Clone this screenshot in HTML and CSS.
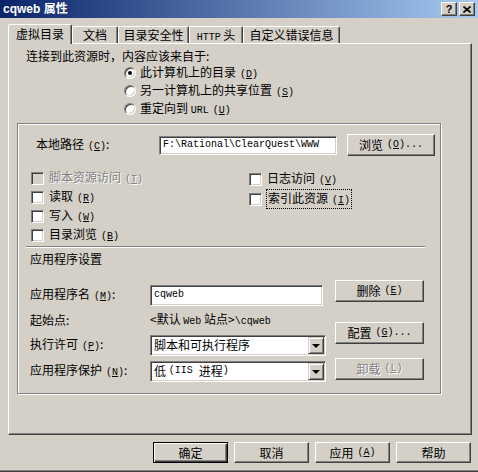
FILE: index.html
```html
<!DOCTYPE html>
<html lang="zh">
<head>
<meta charset="utf-8">
<title>cqweb 属性</title>
<link rel="stylesheet" href="styles.css">
</head>
<body>
<div class="window">
  <div class="titlebar">
    <span class="title">cqweb 属性</span>
    <div class="tb-btns">
      <span class="tb-btn help">?</span>
      <span class="tb-btn"><svg width="8" height="7" viewBox="0 0 8 7"><path d="M0.5 0.5 L7.5 6.5 M7.5 0.5 L0.5 6.5" stroke="#000" stroke-width="1.6" fill="none"/></svg></span>
    </div>
  </div>

  <div class="tabs">
    <div class="tab t1 active">虚拟目录</div>
    <div class="tab t2">文档</div>
    <div class="tab t3">目录安全性</div>
    <div class="tab t4"><span class="mono">HTTP</span> 头</div>
    <div class="tab t5">自定义错误信息</div>
  </div>

  <div class="panel">
    <div class="intro">连接到此资源时，内容应该来自于:</div>
    <div class="radios">
      <div class="radio-row"><span class="radio checked"></span><span>此计算机上的目录<span class="acc">(<u>D</u>)</span></span></div>
      <div class="radio-row"><span class="radio"></span><span>另一计算机上的共享位置<span class="acc">(<u>S</u>)</span></span></div>
      <div class="radio-row"><span class="radio"></span><span>重定向到 <span class="mono">URL</span><span class="acc">(<u>U</u>)</span></span></div>
    </div>

    <div class="group">
      <div class="path-row">
        <span class="path-label">本地路径<span class="acc">(<u>C</u>)</span>:</span>
        <div class="field path-field"><span class="mono">F:\Rational\ClearQuest\WWW</span></div>
        <div class="btn browse">浏览<span class="acc">(<u>O</u>)...</span></div>
      </div>

      <div class="checks">
        <div class="check-col left">
          <div class="check-row disabled"><span class="checkbox off"></span><span>脚本资源访问<span class="acc">(<u>T</u>)</span></span></div>
          <div class="check-row"><span class="checkbox"></span><span>读取<span class="acc">(<u>R</u>)</span></span></div>
          <div class="check-row"><span class="checkbox"></span><span>写入<span class="acc">(<u>W</u>)</span></span></div>
          <div class="check-row"><span class="checkbox"></span><span>目录浏览<span class="acc">(<u>B</u>)</span></span></div>
        </div>
        <div class="check-col right">
          <div class="check-row"><span class="checkbox"></span><span>日志访问<span class="acc">(<u>V</u>)</span></span></div>
          <div class="check-row"><span class="checkbox"></span><span class="focus">索引此资源<span class="acc">(<u>I</u>)</span></span></div>
        </div>
      </div>

      <div class="sep"></div>
      <div class="app-title">应用程序设置</div>

      <div class="app">
        <div class="app-fields">
          <div class="app-row">
            <span class="app-label">应用程序名<span class="acc">(<u>M</u>)</span>:</span>
            <div class="field app-input"><span class="mono">cqweb</span></div>
          </div>
          <div class="app-row origin">
            <span class="app-label">起始点:</span>
            <span class="origin-val">&lt;默认 <span class="mono">Web</span> 站点&gt;<span class="mono">\cqweb</span></span>
          </div>
          <div class="app-row">
            <span class="app-label">执行许可<span class="acc">(<u>P</u>)</span>:</span>
            <div class="field select"><span class="sel-text">脚本和可执行程序</span><span class="drop"><span class="tri"></span></span></div>
          </div>
          <div class="app-row protect">
            <span class="app-label">应用程序保护<span class="acc">(<u>N</u>)</span>:</span>
            <div class="field select"><span class="sel-text">低&nbsp;<span class="mono">(IIS&nbsp;</span>进程<span class="mono">)</span></span><span class="drop"><span class="tri"></span></span></div>
          </div>
        </div>
        <div class="app-btns">
          <div class="btn del">删除<span class="acc">(<u>E</u>)</span></div>
          <div class="btn cfg">配置<span class="acc">(<u>G</u>)...</span></div>
          <div class="btn unload disabled">卸载<span class="acc">(<u>L</u>)</span></div>
        </div>
      </div>
    </div>
  </div>

  <div class="footer">
    <div class="btn default">确定</div>
    <div class="btn">取消</div>
    <div class="btn">应用<span class="acc">(<u>A</u>)</span></div>
    <div class="btn">帮助</div>
  </div>
</div>
</body>
</html>
```

FILE: styles.css
```css
* { box-sizing: border-box; }

body {
  margin: 0;
  background: #d4d0c8;
  font-family: "Noto Sans CJK SC", "Liberation Sans", sans-serif;
  font-size: 12px;
  line-height: 16px;
  color: #000;
}

.window {
  width: 478px;
  height: 472px;
  background: #d4d0c8;
  border-bottom: 1px solid #404040;
  box-shadow: inset 0 -1px #808080;
  overflow: hidden;
}

.mono {
  font-family: "Liberation Mono", monospace;
  font-size: 10px;
}

.acc {
  font-family: "Liberation Mono", monospace;
  font-size: 10px;
  margin-left: 4px;
}

u { text-decoration: underline; text-underline-offset: 1px; }

/* title bar */
.titlebar {
  height: 18px;
  display: flex;
  align-items: center;
  justify-content: space-between;
  padding: 0 3px;
  background: linear-gradient(to right, #0a246a, #a6caf0);
}
.title {
  color: #fff;
  font-family: "Liberation Sans", "Noto Sans CJK SC", sans-serif;
  font-weight: bold;
  font-size: 12px;
  line-height: 14px;
}
.tb-btns { display: flex; gap: 2px; }
.tb-btn {
  width: 16px;
  height: 14px;
  background: #d4d0c8;
  border: 1px solid;
  border-color: #fff #404040 #404040 #fff;
  box-shadow: inset -1px -1px #808080;
  display: flex;
  align-items: center;
  justify-content: center;
  font-family: "Liberation Sans", sans-serif;
  font-weight: bold;
  font-size: 11px;
  line-height: 12px;
}

/* tabs */
.tabs {
  display: flex;
  align-items: flex-end;
  height: 19px;
  margin: 6px 0 0 8px;
  position: relative;
  z-index: 1;
}
.tab {
  height: 17px;
  border: 1px solid;
  border-bottom: 0;
  border-color: #fff #404040 transparent #fff;
  border-radius: 2px 2px 0 0;
  box-shadow: inset -1px 0 #808080;
  text-align: center;
  line-height: 15px;
  white-space: nowrap;
}
.tab.active {
  height: 20px;
  margin-bottom: -1px;
  background: #d4d0c8;
  line-height: 17px;
}
.t1 { width: 64px; }
.t2 { width: 46px; }
.t3 { width: 71px; }
.t4 { width: 54px; }
.t5 { width: 97px; }

/* panel */
.panel {
  margin-left: 8px;
  width: 464px;
  height: 392px;
  border: 1px solid;
  border-color: #fff #404040 #404040 #fff;
  box-shadow: inset -1px -1px #808080;
}
.intro { margin: 4px 0 0 17px; line-height: 16px; }
.radios { margin-left: 115px; }
.radio-row { height: 18px; display: flex; align-items: center; gap: 4px; }
.radio {
  width: 12px;
  height: 12px;
  border-radius: 50%;
  background: #fff;
  border: 1px solid;
  border-color: #808080 #fff #fff #808080;
  box-shadow: inset 1px 1px #404040, inset -1px -1px #d4d0c8;
  display: flex;
  align-items: center;
  justify-content: center;
  flex: none;
}
.radio.checked::after {
  content: "";
  width: 4px;
  height: 4px;
  border-radius: 50%;
  background: #000;
}

/* group box */
.group {
  margin: 5px 0 0 8px;
  width: 424px;
  height: 271px;
  border: 1px solid #808080;
  box-shadow: inset 1px 1px #fff, 1px 1px #fff;
}
.path-row {
  display: flex;
  align-items: center;
  height: 22px;
  margin-top: 10px;
  padding-left: 18px;
}
.path-label { width: 123px; flex: none; }
.field {
  background: #fff;
  border: 1px solid;
  border-color: #808080 #fff #fff #808080;
  box-shadow: inset 1px 1px #404040, inset -1px -1px #d4d0c8;
  height: 19px;
  display: flex;
  align-items: center;
  padding-left: 3px;
  flex: none;
  white-space: nowrap;
}
.path-field { width: 178px; }

.btn {
  background: #d4d0c8;
  border: 1px solid;
  border-color: #fff #404040 #404040 #fff;
  box-shadow: inset -1px -1px #808080;
  height: 22px;
  display: flex;
  align-items: center;
  justify-content: center;
  flex: none;
  white-space: nowrap;
}
.browse { width: 88px; margin-left: 10px; }

.checks { display: flex; margin-top: 13px; padding-left: 13px; }
.check-col.left { width: 218px; }
.check-row { display: flex; align-items: center; gap: 5px; height: 19px; }
.right .check-row { height: 20px; }
.checkbox {
  width: 13px;
  height: 13px;
  flex: none;
  background: #fff;
  border: 1px solid;
  border-color: #808080 #fff #fff #808080;
  box-shadow: inset 1px 1px #404040, inset -1px -1px #d4d0c8;
}
.checkbox.off { background: #d4d0c8; }
.disabled { color: #808080; text-shadow: 1px 1px #fff; }
.focus { outline: 1px dotted #000; padding: 0 1px; line-height: 15px; }

.sep {
  margin: 1px 0 0 8px;
  width: 399px;
  border-top: 1px solid #808080;
  border-bottom: 1px solid #fff;
}
.app-title { margin-top: 3px; padding-left: 12px; line-height: 16px; }

.app { display: flex; margin-top: 13px; }
.app-fields { padding: 4px 0 0 12px; width: 308px; flex: none; }
.app-row { display: flex; align-items: center; height: 22px; }
.app-row.origin { height: 28px; }
.app-row.protect { margin-top: 4px; }
.app-label { width: 120px; flex: none; }
.origin-val { white-space: nowrap; }
.app-input { width: 173px; height: 21px; }
.select {
  width: 176px;
  height: 21px;
  padding: 1px;
  align-items: stretch;
}
.sel-text { flex: 1; display: flex; align-items: center; padding-left: 2px; white-space: pre; }
.drop {
  width: 16px;
  background: #d4d0c8;
  border: 1px solid;
  border-color: #d4d0c8 #404040 #404040 #d4d0c8;
  box-shadow: inset 1px 1px #fff, inset -1px -1px #808080;
  display: flex;
  align-items: center;
  justify-content: center;
}
.tri {
  width: 0;
  height: 0;
  border-left: 4px solid transparent;
  border-right: 4px solid transparent;
  border-top: 4px solid #000;
  margin-top: 1px;
}
.app-btns { margin-left: 9px; display: flex; flex-direction: column; }
.app-btns .btn { width: 89px; }
.cfg { margin-top: 20px; }
.unload { margin-top: 14px; }

/* footer */
.footer {
  display: flex;
  justify-content: flex-end;
  gap: 6px;
  margin-top: 7px;
  padding-right: 7px;
}
.footer .btn { width: 75px; height: 21px; }
.footer .btn.default {
  border: 1px solid #000;
  box-shadow: inset 1px 1px #fff, inset -1px -1px #404040, inset -2px -2px #808080;
}
```
